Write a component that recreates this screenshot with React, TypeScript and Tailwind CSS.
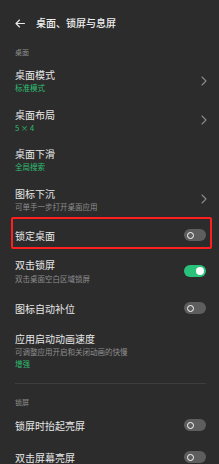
import React from "react";

const font = { fontFamily: '"Noto Sans CJK SC", "Noto Sans", sans-serif' };

function Chevron() {
  return (
    <svg width="6" height="10" viewBox="0 0 6 10" className="shrink-0">
      <path d="M1 1 L5 5 L1 9" fill="none" stroke="#8a8a8a" strokeWidth="1.1" strokeLinecap="round" strokeLinejoin="round" />
    </svg>
  );
}

function Toggle({ on }: { on?: boolean }) {
  if (on) {
    return (
      <div className="w-[22px] h-[12px] rounded-full bg-[#2ac27a] flex items-center justify-end pr-[2px] shrink-0">
        <div className="w-[8px] h-[8px] rounded-full bg-white" />
      </div>
    );
  }
  return (
    <div className="w-[22px] h-[12px] rounded-full bg-[#5e5e5e] flex items-center justify-start pl-[3px] shrink-0">
      <div className="w-[7px] h-[7px] rounded-full border-[1.5px] border-white bg-[#5e5e5e]" />
    </div>
  );
}

function Two({ title, sub, green, h, right }: { title: string; sub: string; green?: boolean; h: string; right?: React.ReactNode }) {
  return (
    <div className={`flex items-center justify-between pl-[15px] pr-[12px] ${h}`}>
      <div className="flex flex-col">
        <div className="text-[10px] leading-[15px] text-[#e8e8e8]">{title}</div>
        <div className={`text-[7.5px] leading-[12px] ${green ? "text-[#2fbf72]" : "text-[#8e8e8e]"}`}>{sub}</div>
      </div>
      {right}
    </div>
  );
}

export default function App() {
  return (
    <div className="w-[219px] h-[464px] bg-[#2c2c2c] overflow-hidden" style={font}>
      <div className="h-[46px] flex items-center pl-[15px]">
        <svg width="10" height="9" viewBox="0 0 10 9">
          <path d="M9.5 4.5 H1 M4.5 1 L1 4.5 L4.5 8" fill="none" stroke="#e8e8e8" strokeWidth="1.1" strokeLinecap="round" strokeLinejoin="round" />
        </svg>
        <div className="ml-[11px] text-[10px] font-medium text-[#eeeeee] leading-[14px]">桌面、锁屏与息屏</div>
      </div>
      <div className="h-[15px] pt-px pl-[15px] text-[7px] leading-[11px] text-[#8e8e8e]">桌面</div>

      <Two title="桌面模式" sub="标准模式" green h="h-[39.5px]" right={<Chevron />} />
      <Two title="桌面布局" sub="5 × 4" green h="h-[39.5px]" right={<Chevron />} />
      <Two title="桌面下滑" sub="全局搜索" green h="h-[39.5px]" right={<div />} />
      <Two title="图标下沉" sub="可单手一步打开桌面应用" h="h-[39.5px]" right={<Chevron />} />

      <div className="relative h-[32px] flex items-center justify-between pl-[15px] pr-[13px]">
        <div className="text-[10px] leading-[15px] text-[#e8e8e8]">锁定桌面</div>
        <Toggle />
        <div className="absolute left-[11px] right-[7px] top-[-2px] h-[32px] border-2 border-[#ff1f1f] rounded-[2px]" />
      </div>

      <div className="h-[40px] flex items-center justify-between pl-[15px] pr-[13px]">
        <div className="flex flex-col">
          <div className="text-[10px] leading-[15px] text-[#e8e8e8]">双击锁屏</div>
          <div className="text-[7.5px] leading-[12px] mt-[1px] text-[#8e8e8e]">双击桌面空白区域锁屏</div>
        </div>
        <Toggle on />
      </div>

      <div className="h-[34px] flex items-center justify-between pl-[15px] pr-[13px]">
        <div className="text-[10px] leading-[15px] text-[#e8e8e8]">图标自动补位</div>
        <Toggle />
      </div>

      <div className="h-[50px] pt-[5.5px] pl-[15px] flex flex-col">
        <div className="text-[10px] leading-[15px] text-[#e8e8e8]">应用启动动画速度</div>
        <div className="text-[7.5px] leading-[12px] text-[#8e8e8e]">可调整应用开启和关闭动画的快慢</div>
        <div className="text-[7.5px] leading-[12px] text-[#2fbf72]">增强</div>
      </div>

      <div className="mt-[8px] mx-[15px] mr-[13px] h-px bg-[#3e3e3e]" />

      <div className="h-[25px] pt-[13px] pl-[15px] text-[7px] leading-[11px] text-[#8e8e8e]">锁屏</div>

      <div className="h-[32px] flex items-center justify-between pl-[15px] pr-[13px]">
        <div className="text-[10px] leading-[15px] text-[#e8e8e8]">锁屏时抬起亮屏</div>
        <Toggle />
      </div>
      <div className="h-[32px] flex items-center justify-between pl-[15px] pr-[13px]">
        <div className="text-[10px] leading-[15px] text-[#e8e8e8]">双击屏幕亮屏</div>
        <Toggle />
      </div>
    </div>
  );
}
